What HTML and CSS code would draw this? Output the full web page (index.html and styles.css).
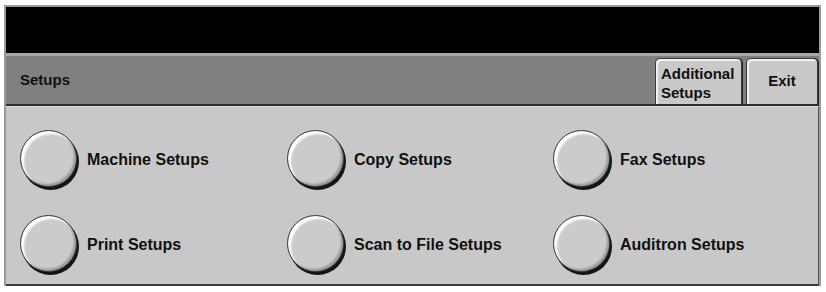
FILE: index.html
```html
<!DOCTYPE html>
<html>
<head>
<meta charset="utf-8">
<link rel="stylesheet" href="styles.css">
</head>
<body>
<div class="screen">
  <div class="topbar"></div>
  <div class="header">
    <div class="title">Setups</div>
    <div class="hbtns">
      <div class="hbtn add">Additional<br>Setups</div>
      <div class="hbtn exit">Exit</div>
    </div>
  </div>
  <div class="content">
    <div class="item"><div class="knob"></div><span class="label">Machine Setups</span></div>
    <div class="item"><div class="knob"></div><span class="label">Copy Setups</span></div>
    <div class="item"><div class="knob"></div><span class="label">Fax Setups</span></div>
    <div class="item"><div class="knob"></div><span class="label">Print Setups</span></div>
    <div class="item"><div class="knob"></div><span class="label">Scan to File Setups</span></div>
    <div class="item"><div class="knob"></div><span class="label">Auditron Setups</span></div>
  </div>
</div>
</body>
</html>
```
FILE: styles.css
```css
html, body {
  margin: 0;
  padding: 0;
  background: #ffffff;
}
body {
  font-family: "Liberation Sans", Arial, sans-serif;
  color: #111;
}
.screen {
  margin: 5px 0 0 4px;
  width: 813px;
  border: 2px solid #9a9a9a;
  border-bottom: none;
  background: #c8c8c8;
}
.topbar {
  height: 46px;
  background: #000;
  border-bottom: 3px solid #a8a8a8;
}
.header {
  height: 48px;
  background: #808080;
  border-bottom: 2px solid #2e2e2e;
  display: flex;
  align-items: stretch;
  justify-content: space-between;
}
.title {
  font-weight: bold;
  font-size: 15px;
  padding-left: 14px;
  display: flex;
  align-items: center;
  padding-bottom: 2px;
}
.hbtns {
  display: flex;
  gap: 4px;
  padding-top: 2px;
  padding-right: 1px;
}
.hbtn {
  background: #c9c9c9;
  border: 1px solid #3a3a3a;
  border-bottom: none;
  border-radius: 5px 5px 0 0;
  box-shadow: inset 2px 2px 0 #f2f2f2, 1px 0 0 #222;
  font-weight: bold;
  font-size: 15px;
  box-sizing: border-box;
}
.add {
  width: 87px;
  padding: 5px 0 0 5px;
  line-height: 19px;
}
.exit {
  width: 72px;
  display: flex;
  align-items: center;
  justify-content: center;
  padding-bottom: 2px;
}
.content {
  border-top: 1px solid #dcdcdc;
  border-bottom: 2px solid #3a3a3a;
  border-right: 1px solid #555;
  display: grid;
  grid-template-columns: 267px 266px 1fr;
  grid-template-rows: 57px 57px;
  row-gap: 28px;
  padding: 24px 0 11px 14px;
}
.item {
  display: flex;
  align-items: center;
  gap: 10px;
}
.knob {
  width: 57px;
  height: 57px;
  box-sizing: border-box;
  border-radius: 50%;
  background: #cbcbcb;
  border: 1px solid #3c3c3c;
  box-shadow: inset 3px 3px 2px #ffffff, inset -2px -2px 2px #9a9a9a, 2px 3px 0 #151515;
  margin-bottom: 2px;
  flex: none;
}
.label {
  font-weight: bold;
  font-size: 16px;
}
```
